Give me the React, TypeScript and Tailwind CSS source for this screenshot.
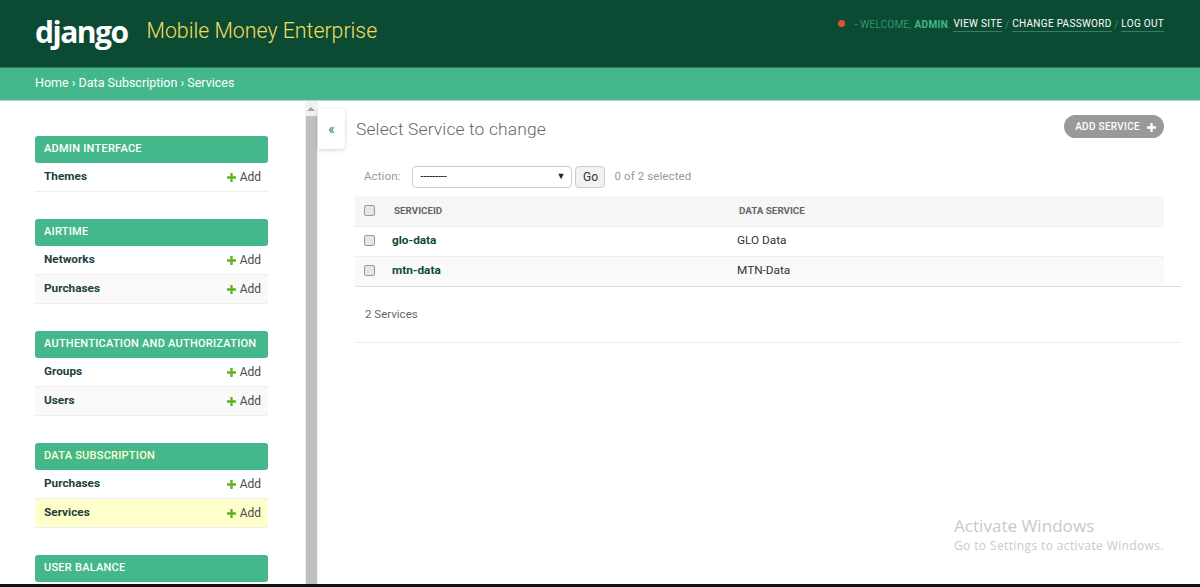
import React from "react";

const sections = [
  { title: "ADMIN INTERFACE", rows: ["Themes"] },
  { title: "AIRTIME", rows: ["Networks", "Purchases"] },
  { title: "AUTHENTICATION AND AUTHORIZATION", rows: ["Groups", "Users"] },
  { title: "DATA SUBSCRIPTION", rows: ["Purchases", "Services"], active: true },
];

function Plus({ className }: { className: string }) {
  return (
    <svg viewBox="0 0 10 10" className={className} fill="currentColor">
      <path d="M3.7 0h2.6v3.7H10v2.6H6.3V10H3.7V6.3H0V3.7h3.7z" />
    </svg>
  );
}

function Box() {
  return <span className="block w-[11px] h-[11px] mt-[-2px] rounded-[2px] border border-[#999999] bg-[#e6e6e6]" />;
}

function Section({ title, rows, active }: { title: string; rows: string[]; active?: boolean }) {
  return (
    <div className="mb-[27px]">
      <div className={`h-[27px] rounded-[3px] bg-[#44b78b] px-[9px] flex items-center whitespace-nowrap text-[11px] font-medium tracking-[0.25px] ${active ? "text-[#ffffcc]" : "text-white"}`}>
        {title}
      </div>
      {rows.map((r, i) => (
        <div
          key={r}
          className={`h-[29px] border-b border-[#eeeeee] pl-[9px] pr-[7px] flex items-center justify-between text-[12px] ${
            active && r === "Services" ? "bg-[#ffffcc]" : i % 2 === 1 ? "bg-[#f9f9f9]" : "bg-white"
          }`}
        >
          <span className="font-bold text-[11.8px] text-[#1d3f3a]">{r}</span>
          <span className="flex items-center gap-[4px] text-[#4a4a4a]">
            <Plus className="w-[9px] h-[9px] text-[#5fb327]" />
            Add
          </span>
        </div>
      ))}
    </div>
  );
}

export default function App() {
  return (
    <div className="relative w-[1200px] h-[587px] overflow-hidden bg-white flex flex-col font-['Roboto',sans-serif] text-[#333]">
      <header className="h-[68px] shrink-0 bg-[#0c4b33] border-b border-[#2a7d5c] pl-[35px] pr-[36px] flex justify-between">
        <div className="flex items-start pt-[10px]">
          <span className="font-['Open_Sans',sans-serif] font-bold text-[30px] leading-[44px] tracking-[-1.5px] text-white">django</span>
          <span className="ml-[19px] mt-[7px] text-[21.3px] leading-[28px] font-light text-[#f5dd5d]">Mobile Money Enterprise</span>
        </div>
        <div className="pt-[17px] flex items-start text-[10px] leading-[15px] tracking-[0.3px] text-[#44b78b]">
          <span className="w-[7px] h-[7px] rounded-full bg-[#e74c3c] mt-[3px] mr-[9px]" />
          <span className="font-light">- WELCOME, <b className="font-bold">ADMIN</b>.&nbsp;</span>
          <span className="text-white border-b border-[#3d7a62] leading-[14px]">VIEW SITE</span>
          <span className="font-light">&nbsp;/&nbsp;</span>
          <span className="text-white border-b border-[#3d7a62] leading-[14px]">CHANGE PASSWORD</span>
          <span className="font-light">&nbsp;/&nbsp;</span>
          <span className="text-white border-b border-[#3d7a62] leading-[14px]">LOG OUT</span>
        </div>
      </header>

      <nav className="h-[32px] shrink-0 bg-[#44b78b] pl-[35px] pb-[2px] flex items-center text-[12.5px] text-white">
        Home › Data Subscription › Services
      </nav>

      <div className="flex-1 flex min-h-0 border-t border-[#a5e0c8]">
        <aside className="w-[305px] shrink-0 pl-[35px] pr-[37px] pt-[35px] overflow-hidden">
          {sections.map((s) => (
            <Section key={s.title} {...s} />
          ))}
          <Section title="USER BALANCE" rows={[]} />
        </aside>

        <div className="w-[13px] shrink-0 bg-[#f1f1f1] flex flex-col items-center pr-[1px]">
          <div className="h-[15px] flex items-center justify-center">
            <span className="w-0 h-0 border-x-[4px] border-x-transparent border-b-[4px] border-b-[#a3a3a3]" />
          </div>
          <div className="w-[11px] flex-1 bg-[#bfbfbf]" />
        </div>

        <main className="relative flex-1 min-w-0 pl-[37px] pr-[19px]">
          <button className="absolute left-0 top-[8px] w-[27px] h-[40px] bg-white rounded-r-[4px] shadow-[0_1px_4px_rgba(0,0,0,0.18)] text-[14px] text-[#2b6a52] flex items-center justify-center">
            «
          </button>

          <div className="flex justify-between pt-[14px] pr-[17px]">
            <h1 className="ml-[1px] mt-[1px] text-[17.4px] leading-[27px] font-light text-[#666] tracking-[0.15px]">Select Service to change</h1>
            <a className="h-[23px] pl-[11px] pr-[8px] rounded-full bg-[#999999] text-white text-[10px] font-medium tracking-[0.3px] flex items-center gap-[7px]">
              ADD SERVICE
              <Plus className="w-[9px] h-[9px] text-white mt-[1px]" />
            </a>
          </div>

          <div className="mt-[23px] h-[22px] pl-[9px] flex items-center text-[11.5px] text-[#999]">
            <span className="tracking-[0.1px]">Action:</span>
            <div className="ml-[12px] w-[160px] h-[22px] rounded-[4px] border border-[#cccccc] bg-white pl-[7px] pr-[6px] flex items-center justify-between text-black text-[10.5px]">
              <span>---------</span>
              <span className="text-[9px] text-[#222]">▼</span>
            </div>
            <span className="ml-[3px] w-[30px] h-[22px] rounded-[4px] border border-[#cccccc] bg-[#f2f2f2] text-[#333] text-[12px] flex items-center justify-center">Go</span>
            <span className="ml-[9px] tracking-[0.1px]">0 of 2 selected</span>
          </div>

          <div className="mt-[8px] mr-[17px]">
            <div className="h-[30px] bg-[#f6f6f6] flex items-center pl-[9px] text-[9.8px] font-bold text-[#666]">
              <Box />
              <span className="ml-[19px] w-[345px]">SERVICEID</span>
              <span>DATA SERVICE</span>
            </div>
            <div className="h-[30px] border-t border-[#eeeeee] flex items-center pl-[9px] text-[11.8px]">
              <Box />
              <span className="ml-[17px] mt-[-1px] w-[345px] font-bold text-[#0c4b33]">glo-data</span>
              <span className="mt-[-1px] text-[#333]">GLO Data</span>
            </div>
            <div className="h-[30px] border-t border-[#eeeeee] bg-[#f9f9f9] flex items-center pl-[9px] text-[11.8px]">
              <Box />
              <span className="ml-[17px] mt-[-1px] w-[345px] font-bold text-[#0c4b33]">mtn-data</span>
              <span className="mt-[-1px] text-[#333]">MTN-Data</span>
            </div>
          </div>

          <div className="border-t border-[#dddddd] h-[56px] pl-[10px] flex items-center text-[11.5px] text-[#666]">
            2 Services
          </div>
          <div className="border-t border-[#eeeeee]" />

          <div className="absolute left-[636px] top-[414px] text-[#c9c9c9] font-['Open_Sans',sans-serif]">
            <div className="text-[17.1px] leading-[22px]">Activate Windows</div>
            <div className="text-[12px] leading-[18px] tracking-[0.38px]">Go to Settings to activate Windows.</div>
          </div>
        </main>
      </div>

      <div className="h-[3px] shrink-0 bg-[#111]" />
    </div>
  );
}
